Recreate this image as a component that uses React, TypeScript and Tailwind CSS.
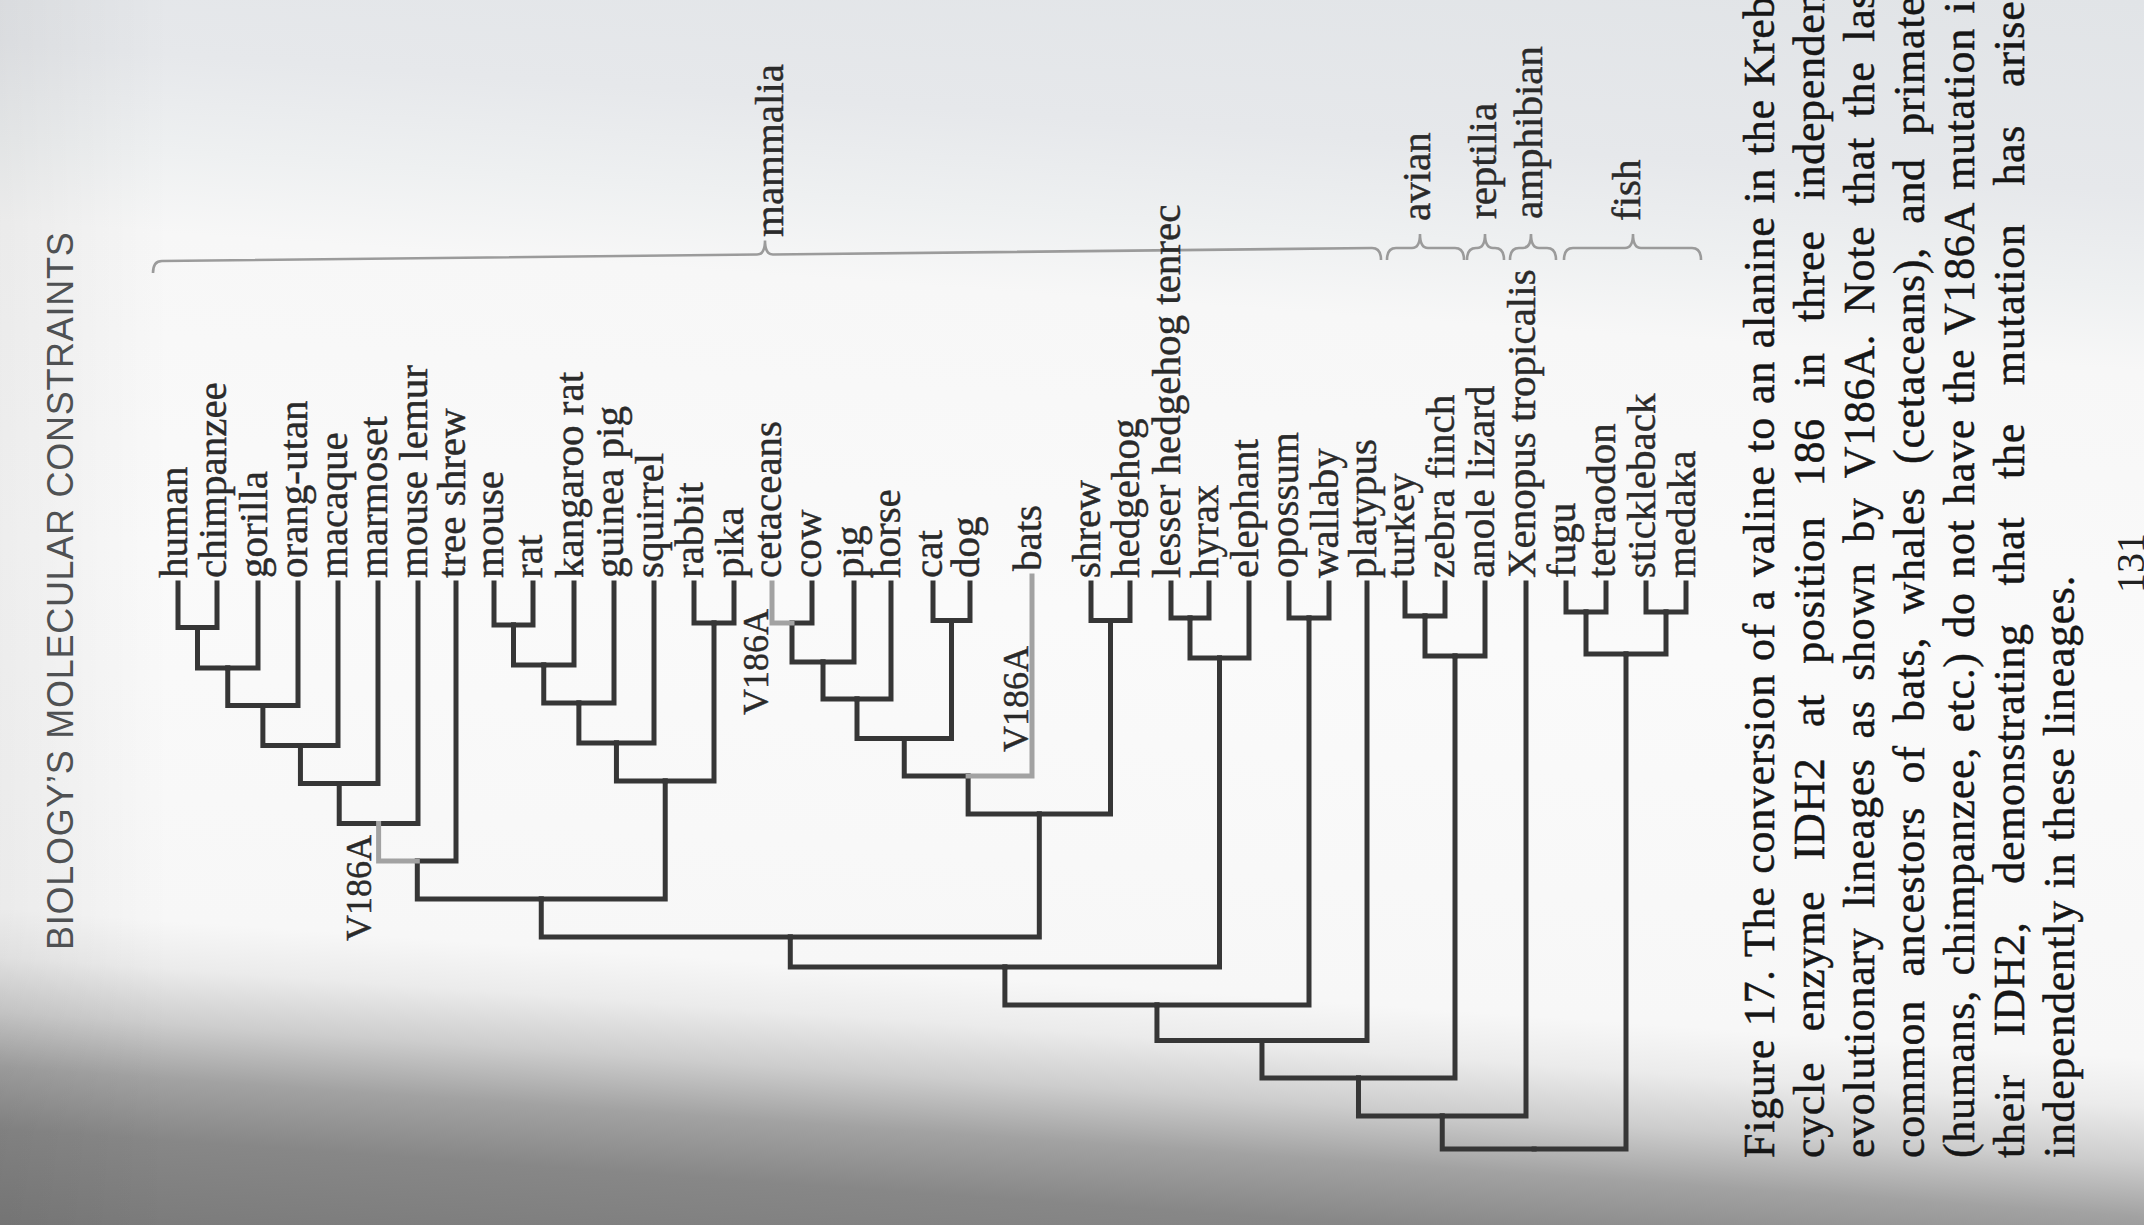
import React from "react";

type N = { name?: string; y: number; sy: number; gray?: boolean; kids?: N[] };

const leaf = (name: string, y: number, gray = false, sy = 583): N => ({ name, y, sy, gray });
const node = (sy: number, kids: N[], gray = false): N => ({
  sy,
  kids,
  gray,
  y: (kids[0].y + kids[kids.length - 1].y) / 2,
});

const tree = node(1149, [
  node(1116, [
    node(1078, [
      node(1040.6, [
        node(1005, [
          node(967, [
            node(937, [
              node(899, [
                node(861, [
                  node(
                    823.5,
                    [
                      node(783.4, [
                        node(745.6, [
                          node(705.5, [
                            node(668, [
                              node(627.6, [leaf("human", 178), leaf("chimpanzee", 217)]),
                              leaf("gorilla", 258),
                            ]),
                            leaf("orang-utan", 298),
                          ]),
                          leaf("macaque", 338),
                        ]),
                        leaf("marmoset", 378),
                      ]),
                      leaf("mouse lemur", 418),
                    ],
                    true
                  ),
                  leaf("tree shrew", 456),
                ]),
                node(781, [
                  node(743, [
                    node(703, [
                      node(665, [
                        node(625, [leaf("mouse", 494), leaf("rat", 533)]),
                        leaf("kangaroo rat", 574),
                      ]),
                      leaf("guinea pig", 614),
                    ]),
                    leaf("squirrel", 654),
                  ]),
                  node(623, [leaf("rabbit", 694), leaf("pika", 734)]),
                ]),
              ]),
              node(814, [
                node(776, [
                  node(738.5, [
                    node(699, [
                      node(662, [
                        node(623, [leaf("cetaceans", 772, true), leaf("cow", 812)]),
                        leaf("pig", 854),
                      ]),
                      leaf("horse", 891),
                    ]),
                    node(620.6, [leaf("cat", 933), leaf("dog", 970)]),
                  ]),
                  leaf("bats", 1032, true, 576),
                ]),
                node(620.6, [leaf("shrew", 1091), leaf("hedgehog", 1130)]),
              ]),
            ]),
            node(658, [
              node(618, [leaf("lesser hedgehog tenrec", 1171), leaf("hyrax", 1209)]),
              leaf("elephant", 1249),
            ]),
          ]),
          node(618, [leaf("opossum", 1289), leaf("wallaby", 1329)]),
        ]),
        leaf("platypus", 1367),
      ]),
      node(656, [
        node(616, [leaf("turkey", 1405), leaf("zebra finch", 1445)]),
        leaf("anole lizard", 1485),
      ]),
    ]),
    leaf("Xenopus tropicalis", 1526),
  ]),
  node(654, [
    node(612, [leaf("fugu", 1566), leaf("tetraodon", 1606)]),
    node(612, [leaf("stickleback", 1646), leaf("medaka", 1686)]),
  ]),
]);

const W = 1225;
type Seg = { d: string; gray: boolean };
const segs: Seg[] = [];
const leaves: N[] = [];
function walk(n: N) {
  if (!n.kids) {
    leaves.push(n);
    return;
  }
  const xn = W - n.sy;
  for (const k of n.kids) {
    const xk = W - k.sy;
    segs.push({ d: `M${xn} ${n.y} L${xn} ${k.y} L${xk} ${k.y}`, gray: !!k.gray });
    walk(k);
  }
}
walk(tree);

const xb = (y: number) => (y <= 1381 ? 964 + ((y - 153) * 13) / 1228 : 977);
function brace(y1: number, y2: number, ym: number) {
  const xa = xb(y1);
  const xm = xb(ym);
  const xz = xb(y2);
  return `M${xa - 12} ${y1} Q${xa} ${y1} ${xa} ${y1 + 9} L${xm} ${ym - 8} Q${xm} ${ym} ${xm + 14} ${ym} Q${xm} ${ym} ${xm} ${ym + 8} L${xz} ${y2 - 9} Q${xz} ${y2} ${xz - 12} ${y2}`;
}

const groups = [
  { y1: 153, y2: 1381, ym: 765, label: "mammalia", x: 988, ly: 774 },
  { y1: 1387, y2: 1464, ym: 1420, label: "avian", x: 1004, ly: 1421 },
  { y1: 1467, y2: 1504, ym: 1485, label: "reptilia", x: 1006, ly: 1487 },
  { y1: 1510, y2: 1556, ym: 1531, label: "amphibian", x: 1006, ly: 1533 },
  { y1: 1564, y2: 1701, ym: 1633, label: "fish", x: 1004, ly: 1631 },
];

const mutations = [
  { x: 390, y: 371 },
  { x: 616, y: 768 },
  { x: 579, y: 1028 },
];

const lines = [
  "Figure 17. The conversion of a valine to an alanine in the Krebs",
  "cycle enzyme IDH2 at position 186 in three independent",
  "evolutionary lineages as shown by V186A. Note that the last",
  "common ancestors of bats, whales (cetaceans), and primates",
  "(humans, chimpanzee, etc.) do not have the V186A mutation in",
  "their IDH2, demonstrating that the mutation has arisen",
  "independently in these lineages.",
];

export default function App() {
  return (
    <div className="w-[2144px] h-[1225px] overflow-hidden [background-image:linear-gradient(to_right,rgba(0,0,0,0.05)_0px,rgba(0,0,0,0)_170px),linear-gradient(184deg,#e1e4e7_0%,#e6e8eb_14%,#eef0f1_21%,#f7f7f7_27%,#fafafa_50%,#f7f7f7_77%,#ebebeb_80.5%,#cdcdcd_84.5%,#a2a2a2_88.5%,#878787_93%,#7a7a7a_100%)]">
      <div className="w-[1225px] h-[2144px] origin-top-left translate-y-[1225px] -rotate-90 flex flex-col">
        <div className="h-[100px] shrink-0 pt-[43px] pl-[275px] font-['Liberation_Sans',Arial,sans-serif] text-[36px] leading-none tracking-[0.02em] text-[#4f5153] whitespace-nowrap">
          BIOLOGY’S MOLECULAR CONSTRAINTS
        </div>
        <svg
          className="block shrink-0 font-['Liberation_Serif','Times_New_Roman',serif]"
          width={1225}
          height={1635}
          viewBox="0 100 1225 1635"
        >
          {groups.map((g) => (
            <path key={g.label + "b"} d={brace(g.y1, g.y2, g.ym)} fill="none" stroke="#9b9b9b" strokeWidth={2.6} />
          ))}
          {segs
            .filter((s) => !s.gray)
            .map((s, i) => (
              <path key={"d" + i} d={s.d} fill="none" stroke="#363636" strokeWidth={5} strokeLinecap="square" strokeLinejoin="miter" />
            ))}
          {segs
            .filter((s) => s.gray)
            .map((s, i) => (
              <path key={"g" + i} d={s.d} fill="none" stroke="#a2a2a2" strokeWidth={5} strokeLinecap="square" strokeLinejoin="miter" />
            ))}
          <g fill="#2a2a2a" stroke="#2a2a2a" strokeWidth={0.45}>
            {leaves.map((l) => (
              <text key={l.name} x={W - l.sy + 5} y={l.y + 9} fontSize={41}>
                {l.name}
              </text>
            ))}
            {groups.map((g) => (
              <text key={g.label} x={g.x} y={g.ly + 9} fontSize={41}>
                {g.label}
              </text>
            ))}
            {mutations.map((m, i) => (
              <text key={"m" + i} x={m.x} y={m.y} fontSize={36} textAnchor="end">
                V186A
              </text>
            ))}
          </g>
        </svg>
        <div className="ml-[67px] w-[1180px] shrink-0 font-['Liberation_Serif','Times_New_Roman',serif] text-[44px] leading-[50px] tracking-[0.015em] text-[#161616] [-webkit-text-stroke:0.5px_#161616]">
          {lines.map((t, i) => (
            <div
              key={i}
              className={
                i < lines.length - 1
                  ? "whitespace-nowrap text-justify [text-align-last:justify]"
                  : "whitespace-nowrap text-left"
              }
            >
              {t}
            </div>
          ))}
        </div>
        <div className="mt-[26px] pl-[632px] shrink-0 font-['Liberation_Serif','Times_New_Roman',serif] text-[40px] leading-none text-[#222]">
          131
        </div>
      </div>
    </div>
  );
}
